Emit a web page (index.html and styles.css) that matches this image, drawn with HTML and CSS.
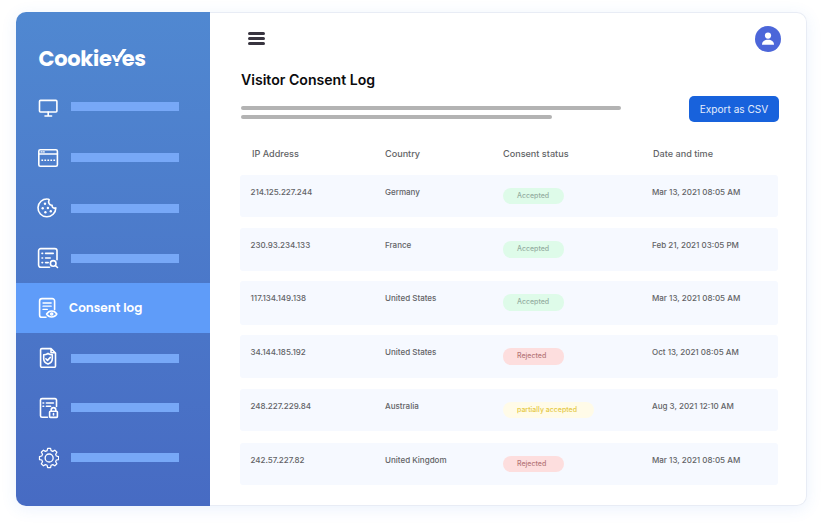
FILE: index.html
```html
<!DOCTYPE html>
<html lang="en">
<head>
  <meta charset="UTF-8" />
  <meta name="viewport" content="width=device-width, initial-scale=1.0"/>
  <title>Visitor Consent Log</title>
  <link rel="stylesheet" href="styles.css">
</head>
<body>
  <div class="app">
    <aside class="sidebar">
      <div class="logo">Cookie<span class="logo-y">Y</span>es</div>
      <nav class="menu">
        <a class="item">
          <svg class="icon" viewBox="0 0 22 22"><rect x="2.5" y="3.4" width="17.4" height="11.6" rx="1"/><path d="M11.2 15v3.6M8 19h6.6"/></svg>
          <span class="bar"></span>
        </a>
        <a class="item">
          <svg class="icon" viewBox="0 0 22 22"><rect x="1.8" y="2.8" width="18.6" height="16.4" rx="1.5"/><path d="M1.8 7h18.6"/><path d="M4 4.9h1M6.3 4.9h1" stroke-width="1.2"/><path class="flat" d="M4.4 13.2h14" stroke-width="1.6" stroke-dasharray="1.7 1.3"/></svg>
          <span class="bar"></span>
        </a>
        <a class="item">
          <svg class="icon" viewBox="0 0 22 22"><path d="M10.5 2a8.9 8.9 0 1 0 8.3 8.9c-2.3.8-4-.4-3.7-2.7-2.7.3-4.4-2.6-2.9-5.5-.3-.4-.9-.7-1.7-.7z"/><g class="dots"><circle cx="8" cy="6.8" r="1.2"/><circle cx="5.7" cy="11.2" r="1.2"/><circle cx="10.9" cy="11" r="1.2"/><circle cx="8.4" cy="15.2" r="1.2"/><circle cx="13.8" cy="14.2" r="1.2"/></g></svg>
          <span class="bar"></span>
        </a>
        <a class="item">
          <svg class="icon" viewBox="0 0 22 22"><path d="M12.5 20.3H3.8A2.2 2.2 0 0 1 1.6 18V3.8a2.2 2.2 0 0 1 2.2-2.2h14a2.2 2.2 0 0 1 2.2 2.2v9"/><path d="M8.6 6.4h7.6M8.6 11h4.6M8.6 15.6h2.6M5 6.4h.6M5 11h.6M5 15.6h.6"/><circle cx="16.2" cy="16.4" r="2.8"/><path d="M18.3 18.5l2.2 2"/></svg>
          <span class="bar"></span>
        </a>
        <a class="item active">
          <svg class="icon" viewBox="0 0 22 22"><path d="M9 20.3H5a2.4 2.4 0 0 1-2.4-2.4V4A2.4 2.4 0 0 1 5 1.6h10.2A2.4 2.4 0 0 1 17.6 4v8.6"/><path d="M6 6h8.2M6 9.2h8.2M6 12.4h4.3" stroke-width="1.3"/><path d="M9.6 17c2.5-4 7.7-4 10.2 0-2.5 3.9-7.7 3.9-10.2 0z"/><circle cx="14.7" cy="17" r="1"/></svg>
          <span>Consent log</span>
        </a>
        <a class="item">
          <svg class="icon" viewBox="0 0 22 22"><path d="M14 1.6H4.8a1.2 1.2 0 0 0-1.2 1.2v16.3a1.2 1.2 0 0 0 1.2 1.2h12.5a1.2 1.2 0 0 0 1.2-1.2V6L14 1.6v4.2h4.3"/><path d="M11 6.3c1.4 1 2.8 1.4 4.3 1.4v4c0 2.5-1.6 4.3-4.3 5.4-2.7-1.1-4.3-2.9-4.3-5.4v-4c1.5 0 2.9-.4 4.3-1.4z"/><path d="M8.9 11.8l1.6 1.6 2.8-3"/></svg>
          <span class="bar"></span>
        </a>
        <a class="item">
          <svg class="icon" viewBox="0 0 22 22"><path d="M10.5 20.3H5a1.5 1.5 0 0 1-1.5-1.5V3.1A1.5 1.5 0 0 1 5 1.6h13a1.5 1.5 0 0 1 1.5 1.5v6.4"/><path d="M9.4 6h7M9.4 9.2h4.2M6 6h.7M6 9.2h.7"/><rect x="12.6" y="14.2" width="7.8" height="6.2" rx=".8"/><path d="M14.2 14v-1.1a2.3 2.3 0 0 1 4.6 0V14M16.5 16.6v1.4"/></svg>
          <span class="bar"></span>
        </a>
        <a class="item">
          <svg class="icon" viewBox="-0.4 0.2 23 23"><path d="M10.7 1.6h3.1l.5 2.4 1.8.8 2.1-1.3 2.2 2.2-1.3 2.1.7 1.8 2.4.6v3.1l-2.4.5-.7 1.8 1.3 2.1-2.2 2.2-2.1-1.3-1.8.7-.5 2.4h-3.1l-.5-2.4-1.8-.7-2.1 1.3-2.2-2.2 1.3-2.1-.8-1.8-2.4-.5v-3.1l2.4-.6.8-1.8-1.3-2.1 2.2-2.2 2.1 1.3 1.8-.8z" stroke-width="1.3"/><circle cx="12.3" cy="11.7" r="4.2" stroke-width="1.4"/></svg>
          <span class="bar"></span>
        </a>
      </nav>
    </aside>

    <main class="content">
      <div class="topbar">
        <div class="burger"><span></span><span></span><span></span></div>
        <svg class="avatar" viewBox="0 0 26 26"><circle cx="13" cy="13" r="13" fill="#4c66d9"/><circle cx="13" cy="9.6" r="3.1" fill="#fff"/><path d="M7 18.8c0-3.3 2.6-5 6-5s6 1.7 6 5z" fill="#fff"/></svg>
      </div>

      <h2>Visitor Consent Log</h2>

      <div class="intro">
        <div class="lines">
          <div class="line"></div>
          <div class="line short"></div>
        </div>
        <button>Export as CSV</button>
      </div>

      <div class="cols head">
        <div>IP Address</div>
        <div>Country</div>
        <div>Consent status</div>
        <div>Date and time</div>
      </div>

      <div class="rows">
        <div class="cols row">
          <div>214.125.227.244</div>
          <div>Germany</div>
          <div><span class="badge accepted">Accepted</span></div>
          <div>Mar 13, 2021 08:05 AM</div>
        </div>
        <div class="cols row">
          <div>230.93.234.133</div>
          <div>France</div>
          <div><span class="badge accepted">Accepted</span></div>
          <div>Feb 21, 2021 03:05 PM</div>
        </div>
        <div class="cols row">
          <div>117.134.149.138</div>
          <div>United States</div>
          <div><span class="badge accepted">Accepted</span></div>
          <div>Mar 13, 2021 08:05 AM</div>
        </div>
        <div class="cols row">
          <div>34.144.185.192</div>
          <div>United States</div>
          <div><span class="badge rejected">Rejected</span></div>
          <div>Oct 13, 2021 08:05 AM</div>
        </div>
        <div class="cols row">
          <div>248.227.229.84</div>
          <div>Australia</div>
          <div><span class="badge partial">partially accepted</span></div>
          <div>Aug 3, 2021 12:10 AM</div>
        </div>
        <div class="cols row">
          <div>242.57.227.82</div>
          <div>United Kingdom</div>
          <div><span class="badge rejected">Rejected</span></div>
          <div>Mar 13, 2021 08:05 AM</div>
        </div>
      </div>
    </main>
  </div>
</body>
</html>
```
FILE: styles.css
```css
* {
  box-sizing: border-box;
}
body {
  margin: 0;
  padding: 12px 16px 20px;
  background: #fff;
  font-family: Inter, sans-serif;
  color: #626366;
}
.app {
  display: flex;
  width: 791px;
  height: 494px;
  border-radius: 10px;
  box-shadow: 0 3px 16px rgba(60, 130, 240, 0.1);
}
.sidebar {
  width: 194px;
  border-radius: 10px 0 0 10px;
  background: linear-gradient(#5088d1, #476bc3);
  color: #fff;
}
.logo {
  height: 71px;
  padding: 32px 0 0 22.5px;
  font-family: Poppins, Inter, sans-serif;
  font-size: 21px;
  line-height: 30px;
  font-weight: 700;
  letter-spacing: -0.3px;
}
.logo-y {
  position: relative;
  display: inline-block;
  font-size: 15.5px;
  line-height: 20px;
}
/* tick arm and the gap above the dot */
.logo-y::before {
  content: "";
  position: absolute;
  left: 8px;
  top: -2px;
  width: 3.5px;
  height: 8px;
  background: #fff;
  transform: skewX(-34deg);
}
.logo-y::after {
  content: "";
  position: absolute;
  left: 2px;
  top: 11px;
  width: 6px;
  height: 1px;
  background: #4f85d0;
}
.item {
  display: flex;
  align-items: center;
  height: 50px;
  padding-left: 21px;
  font-family: Poppins, Inter, sans-serif;
  font-size: 12px;
  font-weight: 600;
}
.item.active {
  background: #5f9cf9;
}
.icon {
  width: 22px;
  height: 22px;
  margin-right: 10px;
  fill: none;
  stroke: #fff;
  stroke-width: 1.6;
  stroke-linecap: round;
  stroke-linejoin: round;
}
.item .icon + .bar {
  margin-left: 2px;
}
.flat {
  stroke-linecap: butt;
}
.dots {
  fill: #fff;
  stroke: none;
}
.bar {
  width: 108px;
  height: 9px;
  background: #77a8f7;
}
.item:first-child .bar {
  margin-bottom: 3px;
}
.item:nth-child(n+7) .bar {
  margin-bottom: 1px;
}
.item:nth-child(2) .bar {
  margin-bottom: 1px;
}
.content {
  flex: 1;
  padding: 13px 28px 0 30px;
  border: 1px solid #e8ecf5;
  border-left: 0;
  border-radius: 0 10px 10px 0;
  background: #fff;
}
.topbar {
  display: flex;
  justify-content: space-between;
  align-items: center;
  height: 26px;
  margin-right: -3px;
  padding-left: 8.4px;
}
.burger {
  display: flex;
  flex-direction: column;
  gap: 2px;
  margin-bottom: 2px;
}
.burger span {
  width: 17px;
  height: 3px;
  border-radius: 1.5px;
  background: #38343f;
}
.avatar {
  width: 26px;
  height: 26px;
}
h2 {
  margin: 18px 0 0 1px;
  font-size: 14.1px;
  line-height: 20px;
  font-weight: 600;
  color: #0b0b0d;
}
.intro {
  display: flex;
  justify-content: space-between;
  margin: 6px -1px 0 1px;
}
.line {
  width: 380px;
  height: 4px;
  margin: 10px 0 5px;
  border-radius: 2px;
  background: #b3b3b3;
}
.line.short {
  width: 311px;
  margin: 0;
}
button {
  width: 90px;
  height: 26px;
  padding: 0;
  border: none;
  border-radius: 5px;
  background: #1862dc;
  color: #e4edfc;
  font-family: Inter, sans-serif;
  font-size: 10.1px;
  cursor: pointer;
}
.cols {
  display: grid;
  grid-template-columns: 134.5px 118px 149px 1fr;
  padding-left: 10.5px;
}
.head {
  margin-top: 25px;
  padding-left: 12px;
  grid-template-columns: 133px 118px 150px 1fr;
  font-size: 9.1px;
  line-height: 14px;
  font-weight: 500;
}
.rows {
  display: grid;
  grid-template-rows: 53px 53px 54px 54px 54px 42px;
  margin-top: 14px;
}
.row {
  width: 538px;
  height: 42px;
  padding-top: 12px;
  border-radius: 3px;
  background: #f6f9ff;
  font-size: 8.03px;
  line-height: 10px;
  font-weight: 500;
}
.row:nth-child(2),
.row:nth-child(4) {
  height: 43px;
}
.row:nth-child(3) {
  height: 44px;
}
.badge {
  display: block;
  width: 61px;
  height: 16px;
  margin-top: 1px;
  padding-left: 14px;
  border-radius: 8px;
  font-size: 7px;
  line-height: 16px;
}
.row:nth-child(2) .badge,
.row:nth-child(3) .badge,
.row:nth-child(4) .badge {
  height: 17px;
}
.accepted {
  background: #defbe9;
  color: #94ada1;
}
.rejected {
  background: #fddede;
  color: #b57678;
}
.partial {
  width: 91px;
  background: #fffbe8;
  color: #e5c945;
}
```
